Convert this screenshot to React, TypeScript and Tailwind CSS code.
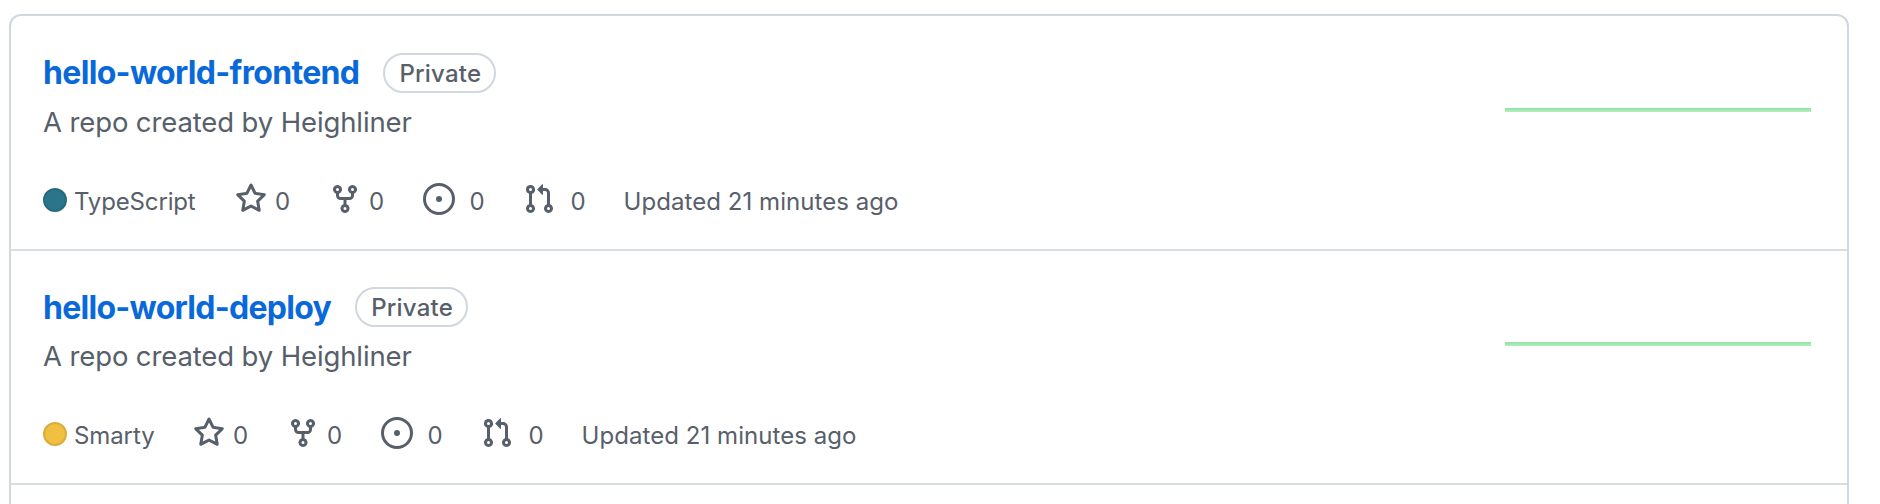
type Repo = {
  name: string;
  language: string;
  dotClass: string;
  rowClass: string;
  titleClass: string;
  languageClass: string;
};

const repos: Repo[] = [
  {
    name: "hello-world-frontend",
    language: "TypeScript",
    dotClass: "bg-[#2b7489] border-[#276a7d]",
    rowClass: "pt-8",
    titleClass: "pt-px tracking-[-0.67px]",
    languageClass: "w-48 tracking-[-0.15px]",
  },
  {
    name: "hello-world-deploy",
    language: "Smarty",
    dotClass: "bg-[#f0c040] border-[#d8ad3a]",
    rowClass: "pt-[31px]",
    titleClass: "pt-0.5 tracking-[-0.72px]",
    languageClass: "w-[150px] tracking-[-0.1px]",
  },
];

const icons = {
  star: "M8 .25a.75.75 0 01.673.418l1.882 3.815 4.21.612a.75.75 0 01.416 1.279l-3.046 2.97.719 4.192a.75.75 0 01-1.088.791L8 12.347l-3.766 1.98a.75.75 0 01-1.088-.79l.72-4.194L.818 6.374a.75.75 0 01.416-1.28l4.21-.611L7.327.668A.75.75 0 018 .25zm0 2.445L6.615 5.5a.75.75 0 01-.564.41l-3.097.45 2.24 2.184a.75.75 0 01.216.664l-.528 3.084 2.769-1.456a.75.75 0 01.698 0l2.77 1.456-.53-3.084a.75.75 0 01.216-.664l2.24-2.183-3.096-.45a.75.75 0 01-.564-.41L8 2.694v.001z",
  fork: "M5 3.25a.75.75 0 11-1.5 0 .75.75 0 011.5 0zm0 2.122a2.25 2.25 0 10-1.5 0v.878A2.25 2.25 0 005.75 8.5h1.5v2.128a2.251 2.251 0 101.5 0V8.5h1.5a2.25 2.25 0 002.25-2.25v-.878a2.25 2.25 0 10-1.5 0v.878a.75.75 0 01-.75.75h-4.5A.75.75 0 015 6.25v-.878zm3.75 7.378a.75.75 0 11-1.5 0 .75.75 0 011.5 0zm3-8.75a.75.75 0 100-1.5.75.75 0 000 1.5z",
  issue: "M8 9.5a1.5 1.5 0 100-3 1.5 1.5 0 000 3zM8 0a8 8 0 100 16A8 8 0 008 0zM1.5 8a6.5 6.5 0 1113 0 6.5 6.5 0 01-13 0z",
  pull: "M7.177 3.073L9.573.677A.25.25 0 0110 .854v4.792a.25.25 0 01-.427.177L7.177 3.427a.25.25 0 010-.354zM3.75 2.5a.75.75 0 100 1.5.75.75 0 000-1.5zm-2.25.75a2.25 2.25 0 113 2.122v5.256a2.251 2.251 0 11-1.5 0V5.372A2.25 2.25 0 011.5 3.25zM11 2.5h-1V4h1a1 1 0 011 1v5.628a2.251 2.251 0 101.5 0V5A2.5 2.5 0 0011 2.5zm1 10.25a.75.75 0 111.5 0 .75.75 0 01-1.5 0zM3.75 12a.75.75 0 100 1.5.75.75 0 000-1.5z",
};

function Stat({ icon, className }: { icon: keyof typeof icons; className: string }) {
  return (
    <span className={`flex shrink-0 ${className}`}>
      <svg viewBox="0 0 16 16" className="size-8 shrink-0" fill="currentColor" fillRule="evenodd" aria-hidden="true">
        <path d={icons[icon]} />
      </svg>
      <span className="pt-px">0</span>
    </span>
  );
}

function RepoRow({ repo }: { repo: Repo }) {
  return (
    <li className={`flex justify-between border-b-2 border-[#d8dee4] pr-9 pb-[30px] pl-8 ${repo.rowClass}`}>
      <div>
        <div className="flex h-12 items-start gap-6">
          <a className={`text-[32px] leading-[48px] font-[650] text-[#0969da] ${repo.titleClass}`}>{repo.name}</a>
          <span className="mt-[5px] flex h-10 w-[113px] items-center justify-center rounded-full border-2 border-[#d0d7de] pt-0.5 pl-px text-[24px] leading-9 font-medium tracking-[0.2px] text-[#57606a]">
            Private
          </span>
        </div>
        <p className="mt-[5px] text-[27.5px] leading-[42px] tracking-[-0.12px] text-[#57606a]">A repo created by Heighliner</p>
        <div className="mt-10 flex h-9 text-[24px] leading-9 text-[#57606a]">
          <span className={`flex shrink-0 gap-[7px] ${repo.languageClass}`}>
            <span className={`mt-[5px] size-6 rounded-full border-2 ${repo.dotClass}`} />
            <span className="pt-px">{repo.language}</span>
          </span>
          <Stat icon="star" className="w-[94px] gap-2" />
          <Stat icon="fork" className="w-[94px] gap-2" />
          <Stat icon="issue" className="w-[100px] gap-[14.5px]" />
          <Stat icon="pull" className="w-[100.5px] gap-[15.5px]" />
          <span className="whitespace-nowrap pt-px tracking-[0.06px]">Updated 21 minutes ago</span>
        </div>
      </div>
      <div className="mt-[60px] h-1 w-[306px] bg-linear-to-b from-[#92e0a5] to-[#b1f0bd]" />
    </li>
  );
}

export default function App() {
  return (
    <main className="h-[504px] overflow-hidden bg-white pt-3.5 pr-[31px] pl-[9px] font-['Inter',sans-serif]">
      <ul className="h-[520px] rounded-t-xl border-2 border-[#d0d7de]">
        {repos.map((repo) => (
          <RepoRow key={repo.name} repo={repo} />
        ))}
      </ul>
    </main>
  );
}
